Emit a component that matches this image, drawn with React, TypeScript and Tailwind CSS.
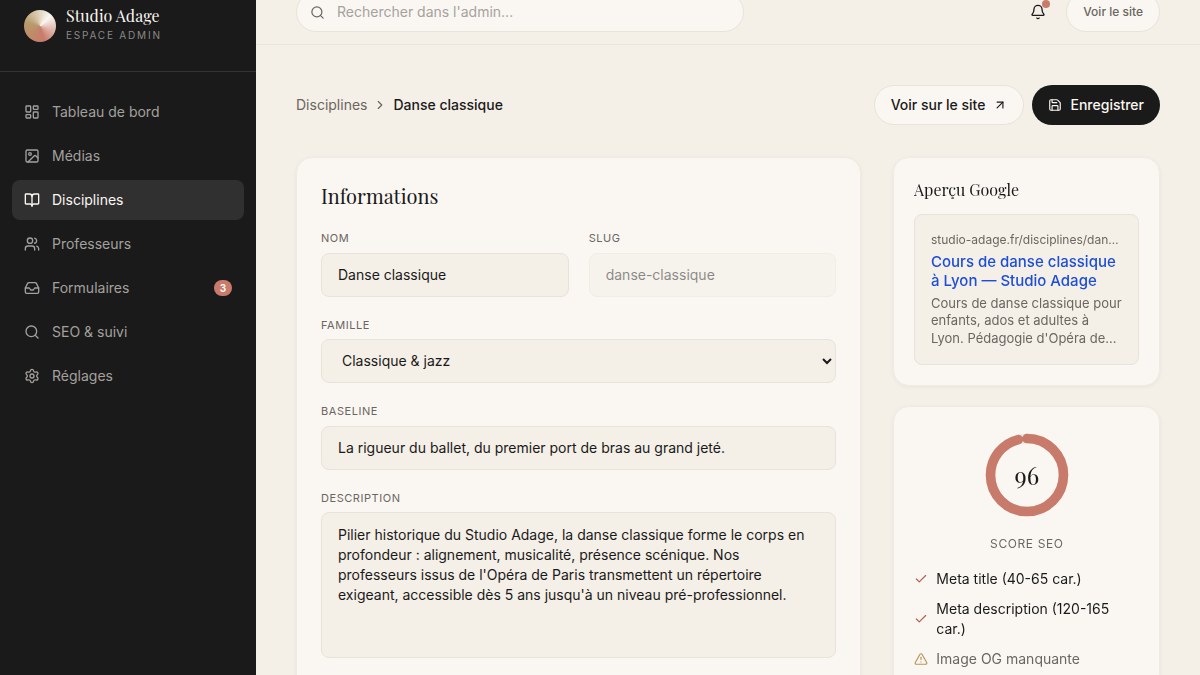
import React from 'react';
import {
  ArrowUpRight,
  Bell,
  BookOpen,
  Check,
  ChevronRight,
  Image as ImageIcon,
  Inbox,
  LayoutDashboard,
  Save,
  Search,
  Settings,
  TriangleAlert,
  Users,
  type LucideIcon,
} from 'lucide-react';

const serif = "font-['Playfair_Display','Liberation_Serif',serif]";

type NavItem = { label: string; icon: LucideIcon; active?: boolean; badge?: number };

const navItems: NavItem[] = [
  { label: 'Tableau de bord', icon: LayoutDashboard },
  { label: 'Médias', icon: ImageIcon },
  { label: 'Disciplines', icon: BookOpen, active: true },
  { label: 'Professeurs', icon: Users },
  { label: 'Formulaires', icon: Inbox, badge: 3 },
  { label: 'SEO & suivi', icon: Search },
  { label: 'Réglages', icon: Settings },
];

function Sidebar() {
  return (
    <aside className="flex w-64 shrink-0 flex-col bg-[#1a1a1a]">
      <div className="flex h-[72px] items-start gap-2.5 border-b border-[#333333] px-6">
        <div className="mt-[10px] size-8 shrink-0 rounded-full bg-[conic-gradient(from_45deg,#faf7f2,#c97b6b_33%,#b89a6a_66%,#faf7f2)]" />
        <div className="mt-[5px]">
          <div className={`${serif} text-base leading-[22px] text-[#faf7f2]`}>Studio Adage</div>
          <div className="text-[10px] leading-4 tracking-[0.18em] text-[#8b8986] uppercase">
            Espace admin
          </div>
        </div>
      </div>
      <nav className="flex flex-col gap-1 px-3 pt-5">
        {navItems.map(({ label, icon: Icon, active, badge }) => (
          <a
            key={label}
            className={`flex h-10 items-center gap-3 rounded-lg px-3 text-sm ${
              active ? 'bg-[#303030] text-[#faf7f2]' : 'text-[#a3a19e]'
            }`}
          >
            <Icon size={16} strokeWidth={2} />
            <span className="flex-1">{label}</span>
            {badge && (
              <span className="flex h-4 w-[18px] items-center justify-center rounded-full bg-[#c97b6b] text-[10px] font-bold text-[#faf7f2]">
                {badge}
              </span>
            )}
          </a>
        ))}
      </nav>
    </aside>
  );
}

function TopBar() {
  return (
    <header className="flex h-[45px] shrink-0 items-end justify-between overflow-hidden border-b border-[#e8e4dc] px-10 pb-3">
      <div className="flex h-10 w-[448px] shrink-0 items-center gap-3 rounded-full border border-[#e8e4d9] bg-[#faf7f2] px-[13px] text-sm text-[#a5a29e]">
        <Search size={15} strokeWidth={2} className="text-[#6b6660]" />
        Rechercher dans l'admin...
      </div>
      <div className="flex h-10 shrink-0 items-center gap-5">
        <div className="relative">
          <Bell size={16} strokeWidth={2} />
          <span className="absolute -top-1 -right-1 size-2 rounded-full bg-[#c97b6b]" />
        </div>
        <button className="h-10 rounded-full border border-[#e8e4d9] bg-[#faf7f2] px-4 text-xs font-medium text-[#6b6660]">
          Voir le site
        </button>
      </div>
    </header>
  );
}

const fieldBox =
  'block w-full rounded-lg border border-[#e8e4d9] bg-[#f4efe7] px-4 text-sm leading-5 text-[#1a1a1a] outline-none';

function Field({ label, children }: { label: string; children: React.ReactNode }) {
  return (
    <label className="block">
      <span className="mb-1.5 block text-[11px] leading-[16.5px] tracking-[0.05em] text-[#6b6660] uppercase">
        {label}
      </span>
      {children}
    </label>
  );
}

const card =
  'rounded-2xl border border-[#f0ebe2] bg-[#faf7f2] shadow-[0_1px_4px_rgba(26,26,26,0.05)]';

function InfoCard() {
  return (
    <section className={`${card} flex min-w-0 flex-col gap-5 p-6`}>
      <h2 className={`${serif} text-xl leading-7`}>Informations</h2>
      <div className="grid grid-cols-2 gap-5">
        <Field label="Nom">
          <input className={`${fieldBox} h-11`} defaultValue="Danse classique" />
        </Field>
        <Field label="Slug">
          <input className={`${fieldBox} h-11 opacity-50`} defaultValue="danse-classique" readOnly />
        </Field>
      </div>
      <Field label="Famille">
        <select className={`${fieldBox} h-11 pb-px`}>
          <option>Classique &amp; jazz</option>
        </select>
      </Field>
      <Field label="Baseline">
        <input
          className={`${fieldBox} h-11`}
          defaultValue="La rigueur du ballet, du premier port de bras au grand jeté."
        />
      </Field>
      <Field label="Description">
        <textarea
          rows={6}
          className={`${fieldBox} resize-none py-3`}
          defaultValue="Pilier historique du Studio Adage, la danse classique forme le corps en profondeur : alignement, musicalité, présence scénique. Nos professeurs issus de l'Opéra de Paris transmettent un répertoire exigeant, accessible dès 5 ans jusqu'à un niveau pré-professionnel."
        />
      </Field>
      <div className="h-16" />
    </section>
  );
}

function GooglePreview() {
  return (
    <section className={`${card} p-5`}>
      <h3 className={`${serif} mb-3 text-base leading-6`}>Aperçu Google</h3>
      <div className="rounded-lg border border-[#e8e4d9] bg-[#f4efe7] p-4">
        <div className="truncate text-xs leading-[18px] text-[#6b6660]">
          studio-adage.fr/disciplines/danse-classique
        </div>
        <div className="mt-1 text-[15px] leading-tight font-medium text-[#1d4ed8]">
          Cours de danse classique à Lyon — Studio Adage
        </div>
        <div className="mt-1 line-clamp-3 text-[13px] leading-snug text-[#6b6660]">
          Cours de danse classique pour enfants, ados et adultes à Lyon. Pédagogie d'Opéra de Paris, du
          débutant au pré-professionnel.
        </div>
      </div>
    </section>
  );
}

const checks = [
  { label: 'Meta title (40-65 car.)', ok: true },
  { label: 'Meta description (120-165 car.)', ok: true },
  { label: 'Image OG manquante', ok: false },
];

function SeoScore() {
  const score = 96;
  const length = 2 * Math.PI * 38;
  return (
    <section className={`${card} p-5`}>
      <div className="flex flex-col items-center pl-px">
        <div className="relative size-24">
          <svg viewBox="0 0 100 100" className="size-24 -rotate-90" fill="none" strokeWidth="10">
            <circle cx="50" cy="50" r="38" stroke="#e8e4d9" />
            <circle
              cx="50"
              cy="50"
              r="38"
              stroke="#c97b6b"
              strokeLinecap="round"
              strokeDasharray={`${(length * score) / 100} ${length}`}
            />
          </svg>
          <div className={`${serif} absolute inset-0 flex items-center justify-center text-2xl`}>
            {score}
          </div>
        </div>
        <div className="mt-3 text-xs leading-[18px] tracking-[0.05em] text-[#6b6660] uppercase">
          Score SEO
        </div>
      </div>
      <ul className="mt-4 flex flex-col gap-2.5 text-sm">
        {checks.map(({ label, ok }) => (
          <li key={label} className="flex items-center gap-[8.33px]">
            {ok ? (
              <Check size={14} strokeWidth={2} className="shrink-0 text-[#b85c4f]" />
            ) : (
              <TriangleAlert size={14} strokeWidth={2} className="shrink-0 text-[#b8965a]" />
            )}
            <span className={ok ? '' : 'text-[#6b6660]'}>{label}</span>
          </li>
        ))}
      </ul>
    </section>
  );
}

export default function App() {
  return (
    <div className="flex h-[675px] w-[1200px] overflow-hidden bg-[#f4efe7] font-['Inter',sans-serif] text-[#1a1a1a]">
      <Sidebar />
      <div className="flex min-w-0 flex-1 flex-col">
        <TopBar />
        <main className="flex flex-col gap-8 px-10 pt-10">
          <div className="flex h-10 items-center justify-between">
            <div className="flex items-center gap-1.5 text-sm">
              <span className="text-[#6b6660]">Disciplines</span>
              <ChevronRight size={14} strokeWidth={2} className="text-[#6b6660]" />
              <span className="font-medium">Danse classique</span>
            </div>
            <div className="flex gap-2">
              <button className="flex h-10 items-center gap-2 rounded-full border border-[#e8e4d9] bg-[#faf7f2] px-4 text-sm font-medium">
                Voir sur le site
                <ArrowUpRight size={14} strokeWidth={2} />
              </button>
              <button className="flex h-10 items-center gap-2 rounded-full bg-[#1a1a1a] px-4 text-sm font-medium text-[#faf7f2]">
                <Save size={14} strokeWidth={2} />
                Enregistrer
              </button>
            </div>
          </div>
          <div className="grid grid-cols-[minmax(0,1fr)_266.67px] items-start gap-8">
            <InfoCard />
            <div className="flex flex-col gap-5 will-change-transform">
              <GooglePreview />
              <SeoScore />
            </div>
          </div>
        </main>
      </div>
    </div>
  );
}
